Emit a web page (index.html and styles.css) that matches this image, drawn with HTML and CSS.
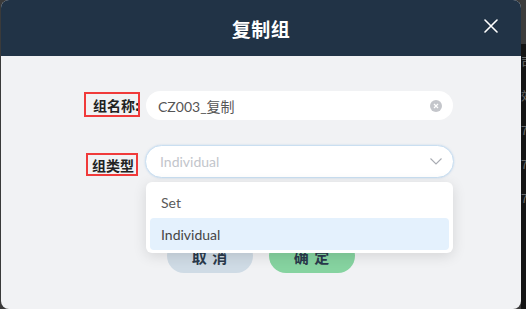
FILE: index.html
```html
<!DOCTYPE html>
<html lang="zh">
<head>
<meta charset="utf-8">
<title>复制组</title>
<link rel="stylesheet" href="styles.css">
</head>
<body>
<div class="edge-left"></div>
<div class="modal">
  <div class="modal-header">
    <div class="title">复制组</div>
    <button class="close" aria-label="close">
      <svg width="14" height="14" viewBox="0 0 14 14"><path d="M1 1L13 13M13 1L1 13" stroke="#fff" stroke-width="1.6" fill="none" stroke-linecap="round"/></svg>
    </button>
  </div>
  <div class="modal-body">
    <div class="form-row row-name">
      <div class="label-col"><span class="mark mark-name">组名称:</span></div>
      <div class="input">
        <span class="input-text">CZ003_复制</span>
        <svg class="clear" width="12" height="12" viewBox="0 0 12 12"><circle cx="6" cy="6" r="6" fill="#c4c6cb"/><path d="M4 4L8 8M8 4L4 8" stroke="#fff" stroke-width="1.2"/></svg>
      </div>
    </div>
    <div class="form-row row-type">
      <div class="label-col"><span class="mark mark-type">组类型</span></div>
      <div class="select-wrap">
        <div class="select">
          <span class="placeholder">Individual</span>
          <svg class="chev" width="12" height="7" viewBox="0 0 12 7"><path d="M0.5 0.5L6 6L11.5 0.5" stroke="#a8abb2" stroke-width="1.1" fill="none"/></svg>
        </div>
        <div class="dropdown">
          <div class="option">Set</div>
          <div class="option active">Individual</div>
        </div>
      </div>
    </div>
    <div class="actions">
      <button class="btn cancel">取 消</button>
      <button class="btn ok">确 定</button>
    </div>
  </div>
</div>
<div class="edge-right">
  <div class="er-top"></div>
  <div class="er-bottom"><span>司</span><span>效</span><span>7</span><span>7</span><span>7</span></div>
</div>
</body>
</html>
```
FILE: styles.css
```css
* { box-sizing: border-box; }
html, body { margin: 0; padding: 0; }
body {
  width: 526px;
  height: 309px;
  overflow: hidden;
  display: flex;
  background: #3a3a3a;
  font-family: "Lato", "Noto Sans CJK SC", sans-serif;
}
.edge-left { width: 1px; background: #3a3a3a; flex: none; }
.modal {
  width: 520px;
  height: 309px;
  flex: none;
  border-radius: 8px;
  overflow: hidden;
  background: #f1f2f4;
  display: flex;
  flex-direction: column;
}
.modal-header {
  height: 56px;
  flex: none;
  background: #213346;
  display: flex;
  align-items: center;
  justify-content: center;
  position: relative;
}
.title {
  color: #fff;
  font-family: "Noto Sans CJK SC", sans-serif;
  font-weight: 700;
  font-size: 19px;
  letter-spacing: 0.5px;
}
.close {
  position: absolute;
  right: 23px;
  top: 19px;
  border: 0;
  background: none;
  padding: 0;
  width: 14px;
  height: 14px;
  display: flex;
}
.modal-body {
  flex: 1;
  padding-top: 35px;
  display: flex;
  flex-direction: column;
}
.form-row { display: flex; }
.label-col {
  width: 145px;
  flex: none;
  display: flex;
  justify-content: flex-end;
  padding-right: 6px;
  font-family: "Noto Sans CJK SC", sans-serif;
  font-weight: 700;
  font-size: 14px;
  color: #222;
}
.mark {
  border: 2px solid #f03a3a;
  white-space: nowrap;
  display: flex;
  align-items: center;
  line-height: 1;
}
.mark-name { width: 56px; height: 25px; padding-left: 7px; margin-top: 1px; overflow: hidden; }
.mark-type { width: 52px; height: 23px; padding-left: 4px; margin-top: 8px; margin-right: 2px; }
.input {
  width: 307px;
  height: 29px;
  background: #fff;
  border-radius: 15px;
  display: flex;
  align-items: center;
  padding: 0 11px 0 12px;
}
.input-text {
  flex: 1;
  font-size: 14px;
  color: #555;
  font-family: "Lato", "Noto Sans CJK SC", sans-serif;
}
.row-type { margin-top: 25px; }
.select-wrap { position: relative; margin-left: -1px; }
.select {
  width: 309px;
  height: 33px;
  background: #fff;
  border: 1.5px solid #cadff1;
  box-shadow: 0 0 2px rgba(150, 190, 230, 0.5);
  border-radius: 17px;
  display: flex;
  align-items: center;
  padding: 0 10px 0 14px;
}
.placeholder { flex: 1; font-size: 14px; color: #c2c5cb; }
.chev { margin-right: 1px; }
.dropdown {
  position: absolute;
  left: 1px;
  top: 37px;
  width: 307px;
  height: 71px;
  background: #fff;
  border-radius: 6px;
  box-shadow: 0 3px 14px rgba(0, 0, 0, 0.12);
  padding: 4px;
  z-index: 5;
}
.option {
  height: 32px;
  display: flex;
  align-items: center;
  padding-left: 11px;
  font-size: 14px;
  color: #5a5a5a;
  border-radius: 4px;
}
.option.active { background: #e4f1fd; color: #454545; }
.actions {
  display: flex;
  gap: 16px;
  padding-left: 166px;
  margin-top: 61px;
}
.btn {
  width: 86px;
  height: 34px;
  border: 0;
  border-radius: 17px;
  font-family: "Noto Sans CJK SC", sans-serif;
  font-weight: 700;
  font-size: 15px;
  color: #2a3a4c;
  letter-spacing: 1px;
}
.cancel { background: #cfdbe5; }
.ok { background: #86d3a0; }
.edge-right { flex: 1; display: flex; flex-direction: column; overflow: hidden; }
.er-top { height: 44px; background: #3c3c3c; flex: none; }
.er-bottom {
  flex: 1;
  background: #141414;
  display: flex;
  flex-direction: column;
  padding-top: 12px;
  gap: 22px;
  font-size: 12px;
  color: #6a6a6a;
  font-family: "Noto Sans CJK SC", sans-serif;
  line-height: 1;
}
```
